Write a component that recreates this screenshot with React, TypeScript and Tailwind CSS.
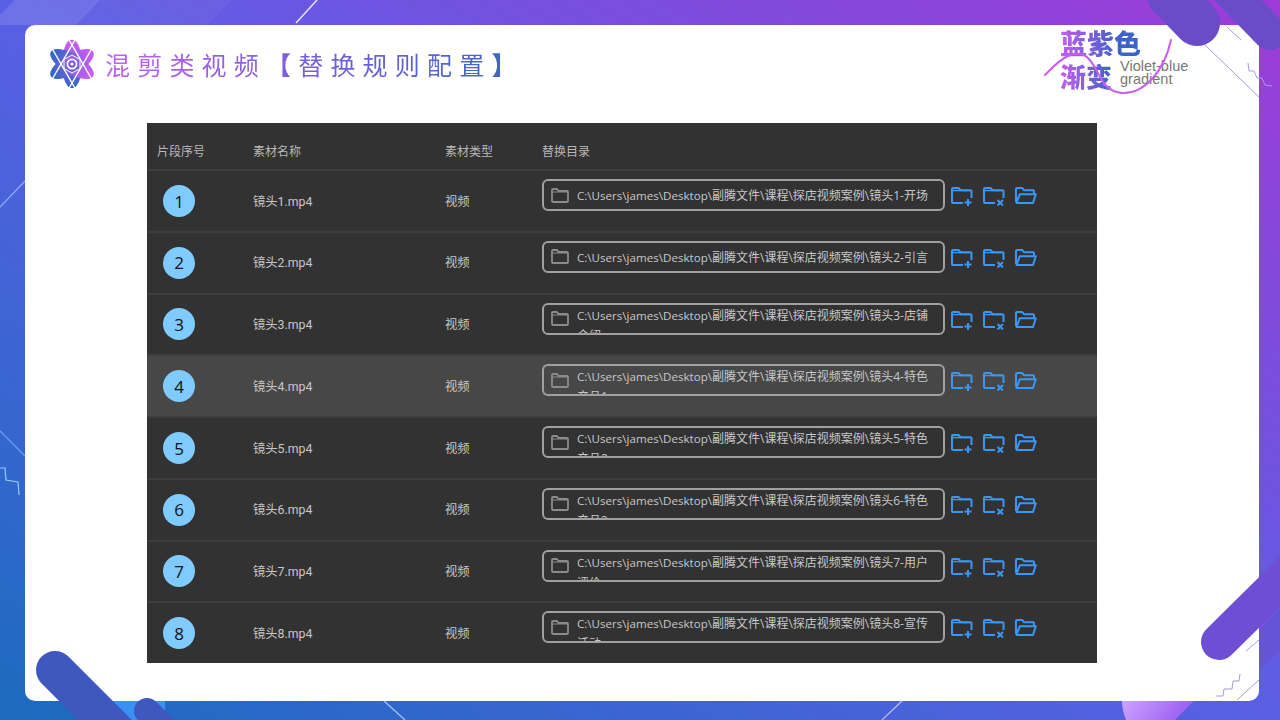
import React from "react";

const rows = [
  { n: 1, tail: "1-开场" },
  { n: 2, tail: "2-引言" },
  { n: 3, tail: "3-店铺介绍" },
  { n: 4, tail: "4-特色产品1" },
  { n: 5, tail: "5-特色产品2" },
  { n: 6, tail: "6-特色产品3" },
  { n: 7, tail: "7-用户评价" },
  { n: 8, tail: "8-宣传活动" },
];

function BgArt() {
  return (
    <svg className="absolute inset-0" width="1280" height="720" viewBox="0 0 1280 720" fill="none">
      <polygon points="0,15 15,0 100,0 76,25 0,25" fill="#fff" fillOpacity="0.12" />
      <polygon points="100,0 232,0 208,25 76,25" fill="#fff" fillOpacity="0.04" />
      <line x1="296" y1="23" x2="317" y2="0" stroke="#e6e4ff" strokeWidth="1.5" />
      <line x1="0" y1="207" x2="25" y2="181" stroke="#8fb0f5" strokeWidth="1.2" />
      <line x1="0" y1="431" x2="25" y2="456" stroke="#6aa0f0" strokeWidth="1.2" />
      <polyline points="0,468 5,468 6,480 18,482 19,495" stroke="#9cc8f8" strokeWidth="1.2" />
      <polygon points="60,701 165,701 165,720 80,720" fill="#3b90f2" />
      <line x1="384" y1="701" x2="405" y2="720" stroke="#a8c4f5" strokeWidth="1.2" />
      <line x1="882" y1="720" x2="903" y2="700" stroke="#c8b8f5" strokeWidth="1.2" />
      <defs>
        <linearGradient id="lilac" x1="0" y1="0" x2="1" y2="0.2">
          <stop offset="0" stopColor="#cfa5ff" />
          <stop offset="1" stopColor="#9a5cf0" />
        </linearGradient>
      </defs>
      <path d="M1122 700 H1195 L1175 720 H1126 Q1122 710 1122 700 Z" fill="url(#lilac)" />
      <polygon points="1259,630 1280,605 1280,580 1259,605" fill="#8a4ce0" />
      <polygon points="1259,630 1280,610 1280,650 1259,670" fill="#6c4ccc" fillOpacity="0.5" />
    </svg>
  );
}

function TopArt() {
  return (
    <svg className="absolute inset-0 pointer-events-none" width="1280" height="720" viewBox="0 0 1280 720" fill="none">
      <line x1="1205" y1="45" x2="1259" y2="97" stroke="#a899dc" strokeWidth="1" />
      <line x1="1227" y1="27" x2="1241" y2="40" stroke="#a899dc" strokeWidth="1" />
      <polyline points="1248,63 1249,71 1254,71 1257,78 1262,78 1265,85 1272,86" stroke="#a89ce0" strokeWidth="1" />
      <line x1="1170" y1="-5" x2="1197" y2="23" stroke="#6a4cc8" strokeWidth="46" strokeLinecap="round" />
      <line x1="1225" y1="-13" x2="1270" y2="33" stroke="#6a4cc8" strokeWidth="34" strokeLinecap="round" />
      <line x1="55" y1="670" x2="135" y2="750" stroke="#3f58bf" strokeWidth="38" strokeLinecap="round" />
      <line x1="147" y1="711" x2="175" y2="739" stroke="#3f58bf" strokeWidth="26" strokeLinecap="round" />
      <line x1="1219" y1="642" x2="1310" y2="552" stroke="#6e4ed2" strokeWidth="36" strokeLinecap="round" />
      <line x1="1246" y1="651" x2="1259" y2="640" stroke="#a899e0" strokeWidth="1" />
      <polyline points="1216,696 1223,696 1224,689 1232,689 1233,681 1239,681 1240,674" stroke="#a899e0" strokeWidth="1" />
      <line x1="1237" y1="700" x2="1259" y2="680" stroke="#a899e0" strokeWidth="1" />
    </svg>
  );
}

function Atom() {
  const rots = [0, 60, 120];
  return (
    <svg width="46" height="48" viewBox="0 0 46 48" fill="none" className="shrink-0">
      <defs>
        <linearGradient id="atomU" gradientUnits="userSpaceOnUse" x1="0" y1="4" x2="0" y2="46">
          <stop offset="0" stopColor="#c65cf2" />
          <stop offset="1" stopColor="#3566c6" />
        </linearGradient>
      </defs>
      {rots.map((r) => (
        <ellipse key={r} cx="23" cy="24" rx="10" ry="24.5" fill="url(#atomU)" transform={`rotate(${r} 23 24)`} />
      ))}
      {[60, 120].map((r) => (
        <g key={r} transform={`rotate(${r} 23 24)`} stroke="#fff" strokeWidth="1.4">
          <line x1="-3" y1="14.5" x2="49" y2="14.5" />
          <line x1="-3" y1="33.5" x2="49" y2="33.5" />
        </g>
      ))}
      <polygon points="23,15 31,19.5 31,28.5 23,33 15,28.5 15,19.5" fill="url(#atomU)" stroke="#fff" strokeWidth="1" />
      <circle cx="23" cy="24" r="4.6" stroke="#fff" strokeWidth="1.8" fill="none" />
      <circle cx="23" cy="24" r="1.5" fill="#fff" />
    </svg>
  );
}

function FolderBase({ children }: { children?: React.ReactNode }) {
  return (
    <svg width="22" height="19" viewBox="0 0 22 19" fill="none" className="shrink-0">
      <path d="M1 15 V2 a1 1 0 0 1 1 -1 H7.5 L9.5 3.2 H19.5 a1 1 0 0 1 1 1 V11" stroke="#3b97f6" strokeWidth="2" strokeLinejoin="round" />
      <path d="M1 15 a1 1 0 0 0 1 1 H12" stroke="#3b97f6" strokeWidth="2" />
      <path d="M1.5 3.6 H19" stroke="#3b97f6" strokeWidth="1.4" />
      {children}
    </svg>
  );
}

function FolderPlusIcon() {
  return (
    <FolderBase>
      <path d="M17 12 V19 M13.5 15.5 H20.5" stroke="#3b97f6" strokeWidth="2" />
    </FolderBase>
  );
}

function FolderXIcon() {
  return (
    <FolderBase>
      <path d="M14.5 13 L20 18.5 M20 13 L14.5 18.5" stroke="#3b97f6" strokeWidth="2" />
    </FolderBase>
  );
}

function FolderOpenIcon() {
  return (
    <svg width="22" height="19" viewBox="0 0 22 19" fill="none" className="shrink-0">
      <path d="M1 15 V2 a1 1 0 0 1 1 -1 H7 L9 3.2 H18 a1 1 0 0 1 1 1 V7" stroke="#3b97f6" strokeWidth="2" strokeLinejoin="round" />
      <path d="M1.5 16 L4.8 7.2 H20.8 L18 16 Z" stroke="#3b97f6" strokeWidth="2" strokeLinejoin="round" />
    </svg>
  );
}

function GrayFolder() {
  return (
    <svg width="18" height="15" viewBox="0 0 18 15" fill="none" className="shrink-0">
      <path d="M1 13 V2 a1 1 0 0 1 1 -1 H6 L7.5 3 H16 a1 1 0 0 1 1 1 V13 a1 1 0 0 1 -1 1 H2 a1 1 0 0 1 -1 -1 Z" stroke="#8c8c8c" strokeWidth="1.8" strokeLinejoin="round" />
      <path d="M1.5 4 H16.5" stroke="#8c8c8c" strokeWidth="1.2" />
    </svg>
  );
}

function Row({ n, tail }: { n: number; tail: string }) {
  const wrapped = tail.length > 4;
  return (
    <div className={`flex-1 grid grid-cols-[96px_192px_97px_1fr] pl-2.5 border-t-2 border-[#3d3d3d] ${n === 4 ? "bg-[#474747]" : ""}`}>
      <div className="flex items-center pl-1.5">
        <div className="w-8 h-8 rounded-full bg-[#7fcbff] flex items-center justify-center text-[17px] text-[#111] pt-px">{n}</div>
      </div>
      <div className="flex items-center pt-[2px] text-[12.3px] text-[#c8c8c8] font-['Roboto','Noto_Sans_CJK_SC',sans-serif]">镜头{n}.mp4</div>
      <div className="flex items-center pt-[2px] text-[12.3px] text-[#c8c8c8]">视频</div>
      <div className="flex items-start pt-[8px] gap-[6px]">
        <div className="w-[403px] h-[32px] shrink-0 rounded-[6px] border-2 border-[#a0a0a0] flex items-center pl-[7px] overflow-hidden">
          <GrayFolder />
          <div className={`ml-[8px] w-[354px] h-[28px] overflow-hidden text-[12px] leading-[20px] text-[#c8c8c8] ${wrapped ? "pt-px" : "pt-[5px]"}`}>
            <span className="text-[11.6px]">{"C:\\Users\\james\\Desktop\\"}</span>
            {"副腾文件\\课程\\探店视频案例\\镜头" + tail}
          </div>
        </div>
        <div className="flex gap-[10px] pt-[8px]">
          <FolderPlusIcon />
          <FolderXIcon />
          <FolderOpenIcon />
        </div>
      </div>
    </div>
  );
}

export default function App() {
  return (
    <div className="relative w-[1280px] h-[720px] overflow-hidden p-[25px] pb-[19px] pr-[21px] bg-[linear-gradient(to_top_right,#1c6bbf,#5a5fe4_50%,#9e3bd8)] font-['Open_Sans','Noto_Sans_CJK_SC',sans-serif]">
      <BgArt />
      <div className="relative w-[1234px] h-[676px] rounded-[10px] bg-white pl-[122px] pt-[98px]">
        <div className="absolute left-[24px] top-[15px] flex items-center gap-[10px]">
          <Atom />
          <div className="text-[25px] leading-[36px] tracking-[7.2px] whitespace-nowrap text-transparent bg-clip-text bg-[linear-gradient(to_right,#c262f2,#7a5fdc_45%,#3c66c6)] font-['Noto_Sans_CJK_SC',sans-serif] mt-[3px] pb-1">
            混剪类视频<span className="font-black">【</span>替换规则配置<span className="font-black">】</span>
          </div>
        </div>
        <div className="absolute left-[1035px] top-[1px] w-[135px] h-[66px] font-['Noto_Sans_CJK_SC',sans-serif]">
          <div className="text-[27px] leading-[33px] font-black text-transparent bg-clip-text bg-[linear-gradient(to_right,#c65cf0,#3d62c6_70%)] whitespace-nowrap w-[81px]">蓝紫色</div>
          <div className="flex items-start">
            <div className="text-[26px] leading-[33px] font-black text-transparent bg-clip-text bg-[linear-gradient(to_right,#c65cf0,#3d62c6)] whitespace-nowrap">渐变</div>
            <div className="ml-[8px] mt-[1px] text-[14.5px] leading-[13px] text-[#777] font-['Liberation_Sans',sans-serif] whitespace-nowrap">
              Violet-blue
              <br />
              gradient
            </div>
          </div>
          <svg className="absolute left-[-16px] top-[6px]" width="150" height="75" viewBox="0 0 150 75" fill="none">
            <path d="M1 43 C8 36 15 28 24 24 C38 18 44 24 50 34 C58 48 62 60 78 61 C100 62 120 40 127 8" stroke="#c95cf0" strokeWidth="2" strokeLinecap="round" />
          </svg>
        </div>
        <div className="flex flex-col w-[950px] h-[540px] bg-[#323232]">
          <div className="h-[46px] shrink-0 grid grid-cols-[96px_192px_97px_1fr] pl-2.5 pt-[12px] items-center text-[12px] text-[#b8b8b8]">
            <div>片段序号</div>
            <div>素材名称</div>
            <div>素材类型</div>
            <div>替换目录</div>
          </div>
          {rows.map((r) => (
            <Row key={r.n} n={r.n} tail={r.tail} />
          ))}
        </div>
      </div>
      <TopArt />
    </div>
  );
}
